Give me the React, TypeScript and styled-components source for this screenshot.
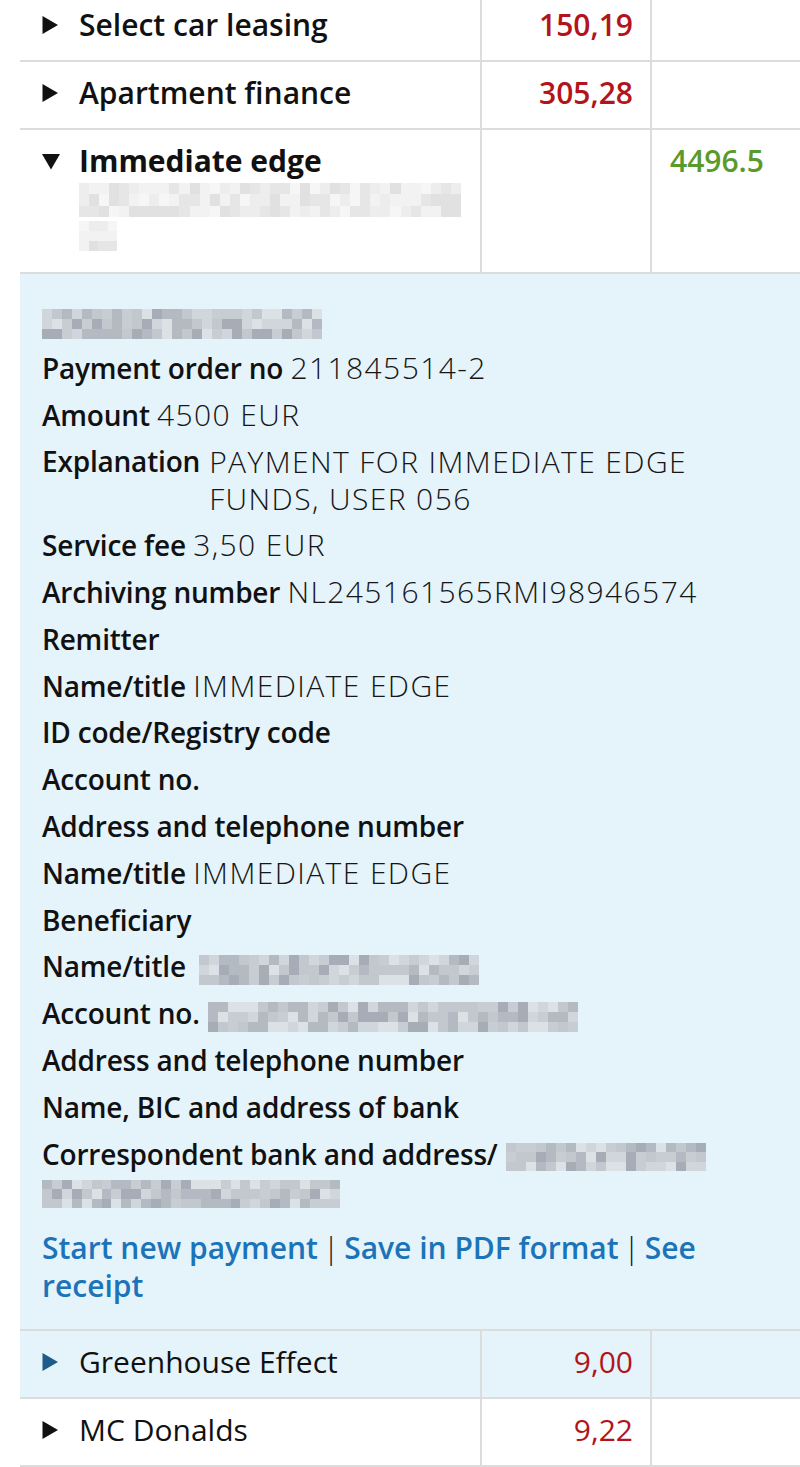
import React from 'react';
import styled, { createGlobalStyle } from 'styled-components';

// Styles
const GlobalStyle = createGlobalStyle`
  html, body {
    margin: 0;
    padding: 0;
    background: #ffffff;
  }
  body {
    font-family: 'Open Sans', 'Noto Sans', sans-serif;
    color: #111111;
    overflow: hidden;
  }
`;

const Page = styled.div`
  width: 800px;
  padding-left: 20px;
  box-sizing: border-box;
  margin-top: -6px;
`;

const Table = styled.div`
  display: flex;
  flex-direction: column;
`;

const Row = styled.div<{ $tint?: boolean }>`
  display: grid;
  grid-template-columns: 462px 170px 148px;
  border-bottom: 2px solid #dcdcdc;
  background: ${(p) => (p.$tint ? '#e5f3fa' : '#ffffff')};
  min-height: 66px;
`;

const Cell = styled.div`
  box-sizing: border-box;
  padding: 13px 0 17px;
  line-height: 36px;
  font-size: 30px;

  &:not(:last-child) {
    border-right: 2px solid #dcdcdc;
  }
`;

const TitleCell = styled(Cell)`
  display: flex;
  align-items: flex-start;
  padding-left: 22px;
`;

const ArrowBox = styled.span`
  width: 18px;
  height: 36px;
  display: flex;
  align-items: center;
  margin-right: 19px;
  flex: none;
`;

const TitleText = styled.div`
  display: flex;
  flex-direction: column;
`;

const Title = styled.span<{ $weight: number }>`
  font-weight: ${(p) => p.$weight};
  color: #111111;
`;

const AmountCell = styled(Cell)<{ $weight: number }>`
  text-align: right;
  padding-right: 17px;
  color: #b3141b;
  font-weight: ${(p) => p.$weight};
`;

const BalanceCell = styled(Cell)`
  padding-left: 18px;
  color: #5a9a2d;
  font-weight: 600;
`;

const Description = styled.div`
  margin: 4px 0 4px;
  display: flex;
  flex-direction: column;
  gap: 4px;
`;

const Details = styled.div`
  background: #e5f3fa;
  border-bottom: 2px solid #dcdcdc;
  padding: 29px 40px 24px 22px;
  display: flex;
  flex-direction: column;
  gap: 9.8px;
  font-size: 28px;
  line-height: 37px;
`;

const Field = styled.div`
  color: #111111;
  line-height: 37px;
`;

const SplitField = styled.div`
  display: flex;
  gap: 9px;
`;

const Label = styled.span`
  font-weight: 600;
  letter-spacing: -0.2px;
`;

const Value = styled.span`
  font-size: 30px;
  line-height: 32px;
  font-weight: 300;
  letter-spacing: 1.4px;
  color: #161616;
`;

const BlockValue = styled(Value)`
  line-height: 37px;
`;

const Links = styled.div`
  margin-top: 10px;
  font-size: 30px;
  line-height: 38px;
  font-weight: 600;
  color: #111111;
`;

const Link = styled.a`
  color: #1b74b9;
  text-decoration: none;
`;

const Sep = styled.span`
  font-weight: 300;
  margin: 0 5px;
`;

const MosaicGrid = styled.span<{ $gap: number }>`
  display: inline-grid;
  vertical-align: middle;
  margin-left: ${(p) => p.$gap}px;
  filter: blur(0.7px);
`;

// Helpers
const tones = {
  light: ['#e6e6e6', '#ededed', '#f2f2f2', '#e1e1e1', '#f6f6f6'],
  dark: ['#b4bac2', '#c3c8cf', '#d1d6dc', '#a7adb6', '#dce1e6', '#c8cdd3'],
};

const Mosaic: React.FC<{ w: number; h: number; tone: 'light' | 'dark'; gap?: number; seed: number }> = ({
  w,
  h,
  tone,
  gap = 0,
  seed,
}) => {
  const cell = 10;
  const cols = Math.round(w / cell);
  const rows = Math.round(h / cell);
  const palette = tones[tone];
  const cells = [];
  for (let i = 0; i < cols * rows; i++) {
    const n = Math.abs(Math.sin((i + 1) * 12.9898 + seed * 78.233) * 43758.5453);
    const c = palette[Math.floor((n - Math.floor(n)) * palette.length)];
    cells.push(<span key={i} style={{ background: c }} />);
  }
  return (
    <MosaicGrid
      $gap={gap}
      style={{
        gridTemplateColumns: `repeat(${cols}, ${w / cols}px)`,
        gridTemplateRows: `repeat(${rows}, ${h / rows}px)`,
      }}
    >
      {cells}
    </MosaicGrid>
  );
};

const Arrow: React.FC<{ down?: boolean; color?: string }> = ({ down, color = '#111' }) => (
  <ArrowBox>
    {down ? (
      <svg width="19" height="17" viewBox="0 0 19 17">
        <polygon points="0,0.5 19,0.5 9.5,17" fill={color} />
      </svg>
    ) : (
      <svg width="16" height="18" viewBox="0 0 16 18">
        <polygon points="0.5,0 16,9 0.5,18" fill={color} />
      </svg>
    )}
  </ArrowBox>
);

interface TxProps {
  title: string;
  amount: string;
  unread?: boolean;
  tint?: boolean;
  arrowColor?: string;
}

const Transaction: React.FC<TxProps> = ({ title, amount, unread, tint, arrowColor }) => (
  <Row $tint={tint}>
    <TitleCell>
      <Arrow color={arrowColor} />
      <Title $weight={unread ? 600 : 400}>{title}</Title>
    </TitleCell>
    <AmountCell $weight={unread ? 600 : 400}>{amount}</AmountCell>
    <Cell />
  </Row>
);

const App: React.FC = () => {
  return (
    <Page>
      <GlobalStyle />
      <Table>
        <Transaction title="Select car leasing" amount="150,19" unread />
        <Transaction title="Apartment finance" amount="305,28" unread />

        <Row>
          <TitleCell>
            <Arrow down />
            <TitleText>
              <Title $weight={700}>Immediate edge</Title>
              <Description>
                <Mosaic w={382} h={34} tone="light" seed={1} />
                <Mosaic w={38} h={30} tone="light" seed={2} />
              </Description>
            </TitleText>
          </TitleCell>
          <Cell />
          <BalanceCell>4496.5</BalanceCell>
        </Row>

        <Details>
          <Field>
            <Mosaic w={280} h={30} tone="dark" seed={3} />
          </Field>
          <Field>
            <Label>Payment order no</Label> <Value>211845514-2</Value>
          </Field>
          <Field>
            <Label>Amount</Label> <Value>4500 EUR</Value>
          </Field>
          <SplitField>
            <Label>Explanation</Label>
            <BlockValue>PAYMENT FOR IMMEDIATE EDGE FUNDS, USER 056</BlockValue>
          </SplitField>
          <Field>
            <Label>Service fee</Label> <Value>3,50 EUR</Value>
          </Field>
          <Field>
            <Label>Archiving number</Label> <Value>NL245161565RMI98946574</Value>
          </Field>
          <Field>
            <Label>Remitter</Label>
          </Field>
          <Field>
            <Label>Name/title</Label> <Value>IMMEDIATE EDGE</Value>
          </Field>
          <Field>
            <Label>ID code/Registry code</Label>
          </Field>
          <Field>
            <Label>Account no.</Label>
          </Field>
          <Field>
            <Label>Address and telephone number</Label>
          </Field>
          <Field>
            <Label>Name/title</Label> <Value>IMMEDIATE EDGE</Value>
          </Field>
          <Field>
            <Label>Beneficiary</Label>
          </Field>
          <Field>
            <Label>Name/title</Label>
            <Mosaic w={280} h={30} tone="dark" seed={4} gap={13} />
          </Field>
          <Field>
            <Label>Account no.</Label>
            <Mosaic w={370} h={30} tone="dark" seed={5} gap={8} />
          </Field>
          <Field>
            <Label>Address and telephone number</Label>
          </Field>
          <Field>
            <Label>Name, BIC and address of bank</Label>
          </Field>
          <Field>
            <Label>Correspondent bank and address/</Label>
            <Mosaic w={200} h={28} tone="dark" seed={6} gap={8} />
            <Mosaic w={298} h={28} tone="dark" seed={7} />
          </Field>
          <Links>
            <Link href="#">Start new payment</Link>
            <Sep>|</Sep>
            <Link href="#">Save in PDF format</Link>
            <Sep>|</Sep>
            <Link href="#">See receipt</Link>
          </Links>
        </Details>

        <Transaction title="Greenhouse Effect" amount="9,00" tint arrowColor="#1d5c8a" />
        <Transaction title="MC Donalds" amount="9,22" />
      </Table>
    </Page>
  );
};

export default App;
